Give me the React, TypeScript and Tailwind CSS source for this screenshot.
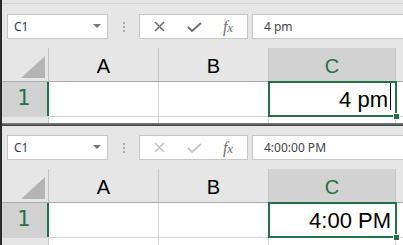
import React from "react";

const GREEN = "#217346";

type PanelProps = {
  formula: string;
  value: string;
  editing?: boolean;
  first?: boolean;
};

function XIcon({ color }: { color: string }) {
  return (
    <svg width="11" height="11" viewBox="0 0 11 11">
      <path d="M1 1 L10 10 M10 1 L1 10" stroke={color} strokeWidth="1.6" fill="none" />
    </svg>
  );
}

function CheckIcon({ color }: { color: string }) {
  return (
    <svg width="15" height="10" viewBox="0 0 15 10">
      <path d="M1 5 L5 9 L14 1" stroke={color} strokeWidth="1.8" fill="none" />
    </svg>
  );
}

function Panel({ formula, value, editing, first }: PanelProps) {
  const btn = editing ? "#6e6e6e" : "#c4c4c4";
  return (
    <div className="flex flex-col bg-[#e6e6e6]">
      {first ? (
        <div className="h-[4px] border-b border-[#d2d2d2] mb-[10px]" />
      ) : (
        <div className="h-[9px]" />
      )}

      {/* ── formula bar ── */}
      <div className="flex h-[25px] pl-[5px]" style={{ fontFamily: '"Noto Sans", "Liberation Sans", sans-serif' }}>
        <div className="w-[101px] flex items-center justify-between bg-white border border-[#c6c6c6] pl-[6px] pr-[6px]">
          <span className="text-[12px] text-[#2f3e55]">C1</span>
          <svg width="8" height="5" viewBox="0 0 8 5">
            <path d="M0 0 H8 L4 4 Z" fill="#777" />
          </svg>
        </div>
        <div className="w-[31px] flex flex-col items-center justify-center gap-[2px]">
          <div className="w-[2px] h-[2px] bg-[#a8a8a8]" />
          <div className="w-[2px] h-[2px] bg-[#a8a8a8]" />
          <div className="w-[2px] h-[2px] bg-[#a8a8a8]" />
        </div>
        <div className="w-[109px] flex items-center bg-white border border-[#c6c6c6]">
          <div className="w-[36px] flex justify-center pl-[2px]">
            <XIcon color={btn} />
          </div>
          <div className="w-[36px] flex justify-center">
            <CheckIcon color={btn} />
          </div>
          <div
            className="flex-1 flex justify-center items-baseline italic text-[#6e6e6e] pr-[3px]"
            style={{ fontFamily: '"Liberation Serif", serif' }}
          >
            <span className="text-[16px]">f</span>
            <span className="text-[13px]">x</span>
          </div>
        </div>
        <div className="flex-1 ml-[4px] flex items-center bg-white border border-r-0 border-[#c6c6c6] pl-[11px] text-[12px] text-[#444]">
          {formula}
        </div>
      </div>

      <div className="h-[9px]" />

      {/* ── column headers ── */}
      <div className="flex h-[34px] border-b border-[#ababab] text-[20px] text-black" style={{ fontFamily: '"Liberation Sans", sans-serif' }}>
        <div className="w-[47px] relative border-r border-[#c4c4c4]">
          <svg className="absolute inset-0" width="47" height="33" viewBox="0 0 47 33">
            <path d="M19 30 H43 V8 Z" fill="#b4b4b4" />
          </svg>
        </div>
        <div className="w-[110px] flex items-center justify-center border-r border-[#c4c4c4] pt-[2px]">A</div>
        <div className="w-[110px] flex items-center justify-center border-r border-[#c4c4c4] pt-[2px]">B</div>
        <div className="w-[127px] flex items-center justify-center bg-[#d2d2d2] border-r border-[#c4c4c4] text-[#217346] pt-[2px]">C</div>
        <div className="flex-1" />
      </div>

      {/* ── row 1 ── */}
      <div className="relative flex h-[35px] border-b border-[#d4d4d4]">
        <div
          className="w-[47px] flex items-center justify-center bg-[#d2d2d2] border-r-2 border-[#217346] text-[21px] text-[#217346] pr-[1px]"
          style={{ fontFamily: '"DejaVu Sans", sans-serif' }}
        >
          1
        </div>
        <div className="w-[110px] bg-white border-r border-[#d4d4d4]" />
        <div className="w-[110px] bg-white border-r border-[#d4d4d4]" />
        <div
          className="w-[127px] bg-white border-r border-[#d4d4d4] flex items-center justify-end pr-[4px] text-[22px] text-black"
          style={{ fontFamily: '"Liberation Sans", sans-serif' }}
        >
          <span>{value}</span>
          {editing && <span className="w-px h-[27px] bg-black ml-[2px] mb-[6px]" />}
        </div>
        <div className="flex-1 bg-white" />

        {/* selection */}
        <div className="absolute z-10 left-[266px] top-[-1px] w-[129px] h-[36px] border-2" style={{ borderColor: GREEN }} />
        <div className="absolute z-20 left-[391px] top-[31px] w-[7px] h-[7px] border border-white" style={{ background: GREEN }} />
      </div>

      {/* ── row 2 (partial) ── */}
      <div className={first ? "flex h-[6px]" : "flex h-[7px]"}>
        <div className="w-[47px] bg-[#e6e6e6] border-r border-[#c4c4c4]" />
        <div className="w-[110px] bg-white border-r border-[#d4d4d4]" />
        <div className="w-[110px] bg-white border-r border-[#d4d4d4]" />
        <div className="w-[127px] bg-white border-r border-[#d4d4d4]" />
        <div className="flex-1 bg-white" />
      </div>
    </div>
  );
}

export default function App() {
  return (
    <div className="w-[403px] h-[245px] overflow-hidden flex flex-col border-l-2 border-[#2b2b2b] bg-[#e6e6e6]">
      <Panel first editing formula="4 pm" value="4 pm" />
      <div className="h-[3px] bg-gradient-to-b from-[#8a8a8a] to-[#3a3a3a]" />
      <Panel formula="4:00:00 PM" value="4:00 PM" />
    </div>
  );
}
